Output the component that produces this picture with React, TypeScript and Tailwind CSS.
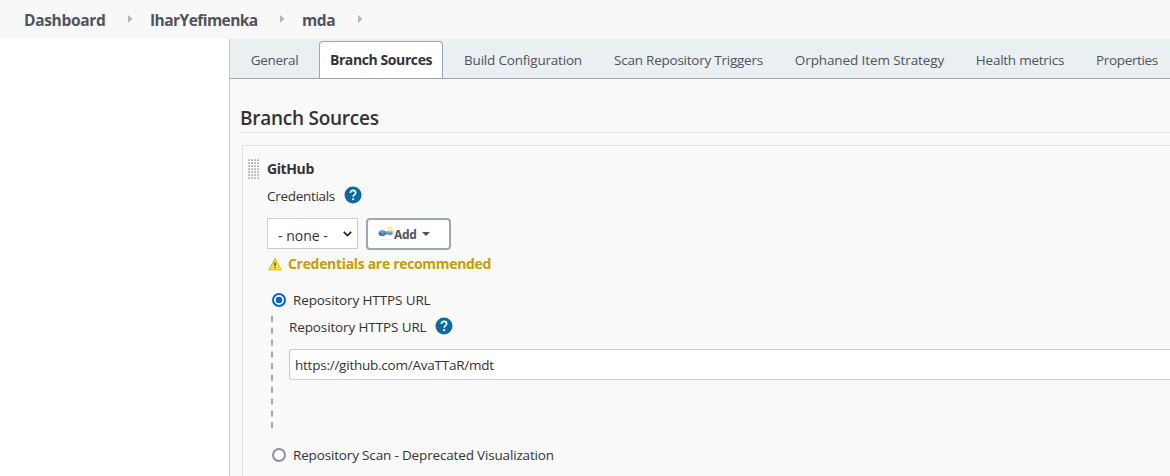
import type { ReactNode } from "react";

const tabs = [
  { label: "General", style: "w-[69px] tracking-[-0.3px]" },
  { label: "Branch Sources", style: "w-[124px] tracking-[-0.4px]", active: true },
  { label: "Build Configuration", style: "w-[140px] tracking-[-0.2px]" },
  { label: "Scan Repository Triggers", style: "w-[171px] tracking-[-0.24px]" },
  { label: "Orphaned Item Strategy", style: "w-[171px] tracking-[-0.1px]" },
  { label: "Health metrics", style: "w-[110px] tracking-[-0.25px]" },
  { label: "Properties", style: "w-[84px] tracking-[-0.36px]" },
];

function Crumb({ children, className }: { children: ReactNode; className: string }) {
  return (
    <div className={`flex shrink-0 items-center justify-between ${className}`}>
      <span className="pb-[2px]">{children}</span>
      <svg width="5" height="8" viewBox="0 0 5 8" className="-mt-[3px]">
        <path d="M0 0L4.5 4L0 8Z" fill="#b5b5b5" />
      </svg>
    </div>
  );
}

function Help() {
  return (
    <svg width="18" height="18" viewBox="0 0 18 18" className="shrink-0">
      <circle cx="9" cy="9" r="8.5" fill="#0b6aa2" />
      <path d="M6.3 7C6.3 5.3 7.4 4.3 9 4.3s2.7 1 2.7 2.5C11.700 8.600 9.200 8.700 9.200 10.700" fill="none" stroke="#fff" strokeWidth="1.7" />
      <rect x="8.200" y="12.200" width="1.900" height="1.900" fill="#fff" />
    </svg>
  );
}

function Key() {
  return (
    <svg width="16" height="16" viewBox="0 0 16 16" className="shrink-0">
      <ellipse cx="7" cy="13.500" rx="6" ry=".8" fill="#eeeeee" />
      <path d="M6 5.500H14.500V8.500H13V9.500H11.500V8.500H6Z" fill="#5487c5" />
      <path d="M7 5.500H14.500V6.800H7Z" fill="#86afe0" />
      <ellipse cx="4.200" cy="7.300" rx="3.700" ry="3" fill="#4b7dbb" />
      <ellipse cx="4" cy="6" rx="2.500" ry="1.300" fill="#75a0d4" />
      <circle cx="2.200" cy="7.500" r=".8" fill="#32557f" />
      <circle cx="12" cy="3" r="1.800" fill="#fffef0" stroke="#fff04a" strokeWidth="1.300" />
    </svg>
  );
}

function Warning() {
  return (
    <svg width="16" height="16" viewBox="0 0 16 16" className="shrink-0">
      <path d="M8 2.500L14.200 14H1.800Z" fill="#f9e03c" stroke="#e0c22e" strokeWidth="1.200" strokeLinejoin="round" />
      <path d="M8 6.500V10" stroke="#4c4215" strokeWidth="1.400" />
      <path d="M8 11V12.200" stroke="#4c4215" strokeWidth="1.400" />
    </svg>
  );
}

function Radio({ checked = false }: { checked?: boolean }) {
  return (
    <svg width="14" height="14" viewBox="0 0 14 14" className="shrink-0">
      <circle cx="7" cy="7" r="6" fill="#fff" stroke={checked ? "#0060df" : "#8f8f9d"} strokeWidth="2" />
      {checked && <circle cx="7" cy="7" r="3.200" fill="#0060df" />}
    </svg>
  );
}

function Grip() {
  return (
    <svg width="12" height="21" className="mt-[13px] shrink-0">
      <defs>
        <pattern id="grip" width="3" height="3" patternUnits="userSpaceOnUse">
          <rect width="3" height="3" fill="#fff" />
          <rect width="2" height="2" fill="#dcdcdc" />
          <rect x="1" width="1" height="1" fill="#b8b8b8" />
          <rect x="0" y="1" width="2" height="1" fill="#b8b8b8" />
        </pattern>
      </defs>
      <rect width="12" height="21" fill="url(#grip)" />
    </svg>
  );
}

export default function App() {
  return (
    <div className="flex h-[476px] w-[1170px] flex-col overflow-hidden bg-white font-['Open_Sans','Noto_Sans',sans-serif] text-[13.5px] leading-5 whitespace-nowrap text-[#333]">
      <header className="flex h-[39px] shrink-0 items-center gap-[17px] bg-[#f8f8f8] pt-[2px] pl-6 text-[15.5px] font-bold text-[#4d545d]">
        <Crumb className="w-[109px] tracking-[-0.33px]">Dashboard</Crumb>
        <Crumb className="w-[135px] tracking-[-0.55px]">IharYefimenka</Crumb>
        <Crumb className="w-[61px] tracking-[-0.4px]">mda</Crumb>
      </header>
      <div className="flex min-h-0 flex-1">
        <aside className="w-[229px] shrink-0 bg-white" />
        <main className="min-w-0 flex-1 border-l border-[#bfc5ca] bg-[#f9f9f9]">
          <nav className="flex h-10 items-end gap-[10px] border-b border-[#98a9b3] bg-[#eaeff2] pl-[10px] text-[#4d545d]">
            {tabs.map((tab) => (
              <div
                key={tab.label}
                className={`flex h-[37px] shrink-0 items-center justify-center border ${tab.style} ${tab.active ? "rounded-t-[4px] border-b-0 border-[#98a9b3] bg-white text-[14px] font-bold text-[#333]" : "border-transparent"}`}
              >
                {tab.label}
              </div>
            ))}
          </nav>
          <h1 className="ml-[10px] flex h-[54px] items-end border-b border-[#dfdfdf] pb-[2px] text-[19px] leading-6 font-semibold tracking-[-0.25px]">Branch Sources</h1>
          <section className="mt-3 ml-3 flex h-[360px] border-t border-l border-[#dfdfdf] pl-[5px]">
            <Grip />
            <div className="ml-[7px] flex-1 pt-[13px]">
              <div className="h-5 text-[14px] font-bold tracking-[-0.4px]">GitHub</div>
              <div className="mt-1 flex h-6 items-center gap-[9px]">
                <span className="pt-px tracking-[-0.3px]">Credentials</span>
                <Help />
              </div>
              <div className="mt-[11px] flex h-8 items-start gap-2">
                <div className="flex h-[31px] w-[91px] items-center justify-between border border-[#ccc] bg-white pt-1 pr-[5px] pl-[10px]">
                  <span className="text-[14px]">- none -</span>
                  <svg width="9" height="6" viewBox="0 0 9 6" className="mb-1">
                    <path d="M.8 .8L4.500 4.500L8.200 .8" fill="none" stroke="#222" strokeWidth="1.700" />
                  </svg>
                </div>
                <button className="flex h-8 w-[85px] items-center rounded-[4px] border-2 border-[#98a9b3] bg-white pl-[10px] text-[12px] font-bold text-[#4d545d]">
                  <Key />
                  <span className="pt-[2px] tracking-[-0.300px]">Add</span>
                  <svg width="8" height="4" viewBox="0 0 8 4" className="ml-[5px]">
                    <path d="M0 0H8L4 4Z" fill="#4d545d" />
                  </svg>
                </button>
              </div>
              <div className="mt-1 flex h-5 items-center gap-[5px] text-[14px] font-bold tracking-[-0.32px] text-[#c4a000]">
                <Warning />
                <span>Credentials are recommended</span>
              </div>
              <div className="mt-4 ml-[5px] flex h-5 items-center gap-[7px]">
                <Radio checked />
                <span className="tracking-[-0.12px]">Repository HTTPS URL</span>
              </div>
              <div className="mt-[6px] flex h-[112px]">
                <svg width="2" height="112" className="ml-1 shrink-0">
                  <path d="M1 0V112" stroke="#a6a6a6" strokeWidth="2" strokeDasharray="6 5.800" />
                </svg>
                <div className="ml-4 flex-1">
                  <div className="flex h-5 items-center gap-2">
                    <span className="pt-px tracking-[-0.12px]">Repository HTTPS URL</span>
                    <Help />
                  </div>
                  <div className="mt-[13px] flex h-[31px] items-center rounded-l-[3px] border border-r-0 border-[#ccc] bg-white pl-[5px] pt-px tracking-[-0.24px]">https://github.com/AvaTTaR/mdt</div>
                </div>
              </div>
              <div className="mt-[17px] ml-[5px] flex h-5 items-center gap-[7px]">
                <Radio />
                <span className="tracking-[-0.16px]">Repository Scan - Deprecated Visualization</span>
              </div>
            </div>
          </section>
        </main>
      </div>
    </div>
  );
}
